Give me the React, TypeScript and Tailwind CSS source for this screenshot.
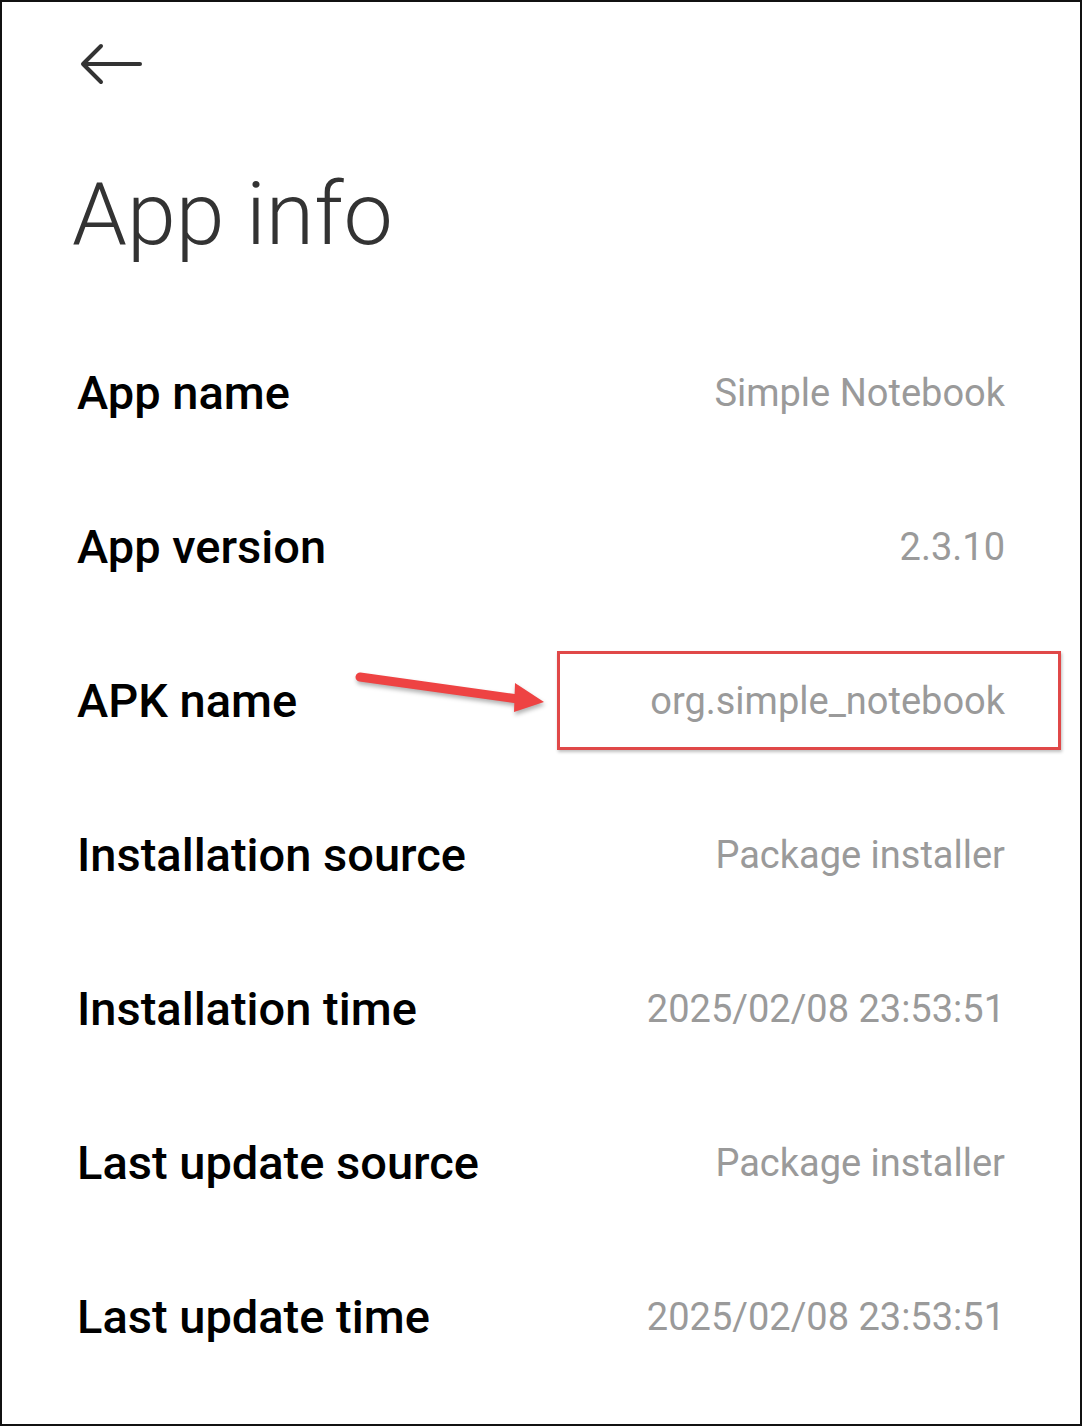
import React from "react";

const rows: { label: string; value: string }[] = [
  { label: "App name", value: "Simple Notebook" },
  { label: "App version", value: "2.3.10" },
  { label: "APK name", value: "org.simple_notebook" },
  { label: "Installation source", value: "Package installer" },
  { label: "Installation time", value: "2025/02/08 23:53:51" },
  { label: "Last update source", value: "Package installer" },
  { label: "Last update time", value: "2025/02/08 23:53:51" },
];

export default function App() {
  return (
    <div
      className="w-[1082px] h-[1426px] bg-white border-2 border-[#111] overflow-hidden"
      style={{ fontFamily: "Roboto, 'Noto Sans', sans-serif" }}
    >
      {/* Header */}
      <div className="h-[124px] pl-[78px] flex items-center">
        <svg width="62" height="42" viewBox="0 0 62 42" fill="none" className="text-[#333]">
          <path d="M60 21H4" stroke="currentColor" strokeWidth="4" strokeLinecap="round" />
          <path d="M21 3L3 21L21 39" stroke="currentColor" strokeWidth="4" strokeLinecap="round" strokeLinejoin="round" />
        </svg>
      </div>
      <div className="h-[190px] pl-[70px] pt-[44px]">
        <h1 className="text-[88px] leading-none font-light text-[#333]">App info</h1>
      </div>

      {/* Rows */}
      <div className="flex flex-col">
        {rows.map((row) => (
          <InfoRow key={row.label} label={row.label} value={row.value} highlight={row.label === "APK name"} />
        ))}
      </div>
    </div>
  );
}

function InfoRow({ label, value, highlight }: { label: string; value: string; highlight?: boolean }) {
  return (
    <div className="relative h-[154px] pl-[75px] pr-[75px] flex items-center justify-between">
      <span className="text-[47px] font-medium text-black">{label}</span>
      <span className="text-[38px] text-[#9a9a9a]">{value}</span>
      {highlight && (
        <>
          <div className="absolute left-[555px] top-[27px] w-[504px] h-[99px] border-[3px] border-[#e04848] shadow-[1px_2px_3px_rgba(0,0,0,0.25)]" />
          <svg
            className="absolute left-[348px] top-[40px]"
            width="200"
            height="60"
            viewBox="0 0 200 60"
            style={{ filter: "drop-shadow(1px 3px 2px rgba(0,0,0,0.3))" }}
          >
            <path d="M10 13L168 35" stroke="#ee4343" strokeWidth="9" strokeLinecap="round" />
            <path d="M165 19L194 38L164 48Z" fill="#ee4343" />
          </svg>
        </>
      )}
    </div>
  );
}
